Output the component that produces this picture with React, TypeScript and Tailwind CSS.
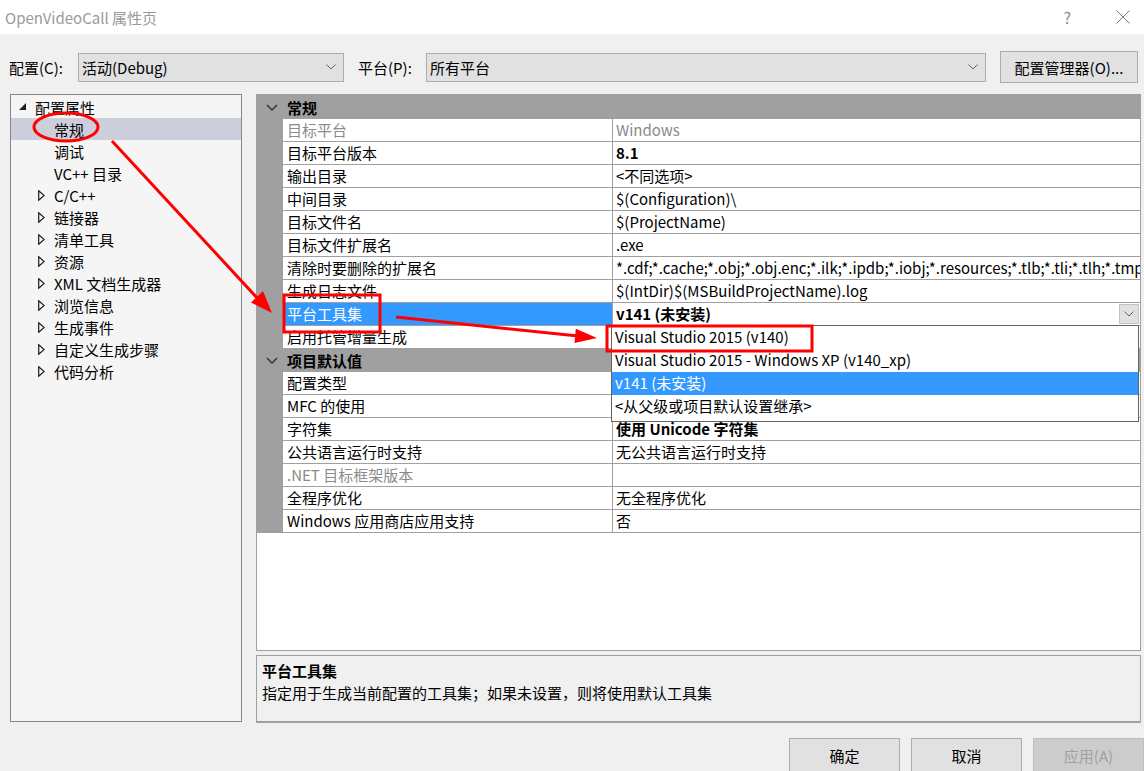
import type { ReactNode } from 'react'

type Prop = {
  name: string
  value?: string
  bold?: boolean
  dim?: boolean
  selected?: boolean
}

const GENERAL: Prop[] = [
  { name: '目标平台', value: 'Windows', dim: true },
  { name: '目标平台版本', value: '8.1', bold: true },
  { name: '输出目录', value: '<不同选项>' },
  { name: '中间目录', value: '$(Configuration)\\' },
  { name: '目标文件名', value: '$(ProjectName)' },
  { name: '目标文件扩展名', value: '.exe' },
  {
    name: '清除时要删除的扩展名',
    value: '*.cdf;*.cache;*.obj;*.obj.enc;*.ilk;*.ipdb;*.iobj;*.resources;*.tlb;*.tli;*.tlh;*.tmp;*.rsp;*.pgc;*.pgd;*.meta',
  },
  { name: '生成日志文件', value: '$(IntDir)$(MSBuildProjectName).log' },
  { name: '平台工具集', value: 'v141 (未安装)', bold: true, selected: true },
  { name: '启用托管增量生成', value: '否' },
]

const DEFAULTS: Prop[] = [
  { name: '配置类型', value: '应用程序(.exe)' },
  { name: 'MFC 的使用', value: '使用标准 Windows 库' },
  { name: '字符集', value: '使用 Unicode 字符集', bold: true },
  { name: '公共语言运行时支持', value: '无公共语言运行时支持' },
  { name: '.NET 目标框架版本', dim: true },
  { name: '全程序优化', value: '无全程序优化' },
  { name: 'Windows 应用商店应用支持', value: '否' },
]

const TREE: { label: string; level: 0 | 1; expander?: 'open' | 'closed'; active?: boolean }[] = [
  { label: '配置属性', level: 0, expander: 'open' },
  { label: '常规', level: 1, active: true },
  { label: '调试', level: 1 },
  { label: 'VC++ 目录', level: 1 },
  { label: 'C/C++', level: 1, expander: 'closed' },
  { label: '链接器', level: 1, expander: 'closed' },
  { label: '清单工具', level: 1, expander: 'closed' },
  { label: '资源', level: 1, expander: 'closed' },
  { label: 'XML 文档生成器', level: 1, expander: 'closed' },
  { label: '浏览信息', level: 1, expander: 'closed' },
  { label: '生成事件', level: 1, expander: 'closed' },
  { label: '自定义生成步骤', level: 1, expander: 'closed' },
  { label: '代码分析', level: 1, expander: 'closed' },
]

const TOOLSETS = [
  'Visual Studio 2015 (v140)',
  'Visual Studio 2015 - Windows XP (v140_xp)',
  'v141 (未安装)',
  '<从父级或项目默认设置继承>',
]

function Chevron({ className = '' }: { className?: string }) {
  return (
    <svg width="10" height="6" viewBox="0 0 10 6" className={className}>
      <path d="M0.5 0.5 L5 5 L9.5 0.5" fill="none" stroke="#606060" strokeWidth="1" />
    </svg>
  )
}

function Combo({ width, children }: { width: string; children: ReactNode }) {
  return (
    <div className={`${width} h-[29px] flex items-center justify-between bg-[#e1e1e1] border border-[#adadad] pl-[3px] pr-[7px]`}>
      <span className="leading-none">{children}</span>
      <Chevron />
    </div>
  )
}

function SectionHeader({ title, tall }: { title: string; tall?: boolean }) {
  return (
    <div className={`${tall ? 'h-[24px]' : 'h-[23px]'} flex items-center bg-[#a0a0a0]`}>
      <div className="w-[30px] flex justify-center">
        <svg width="12" height="7" viewBox="0 0 12 7">
          <path d="M1 1 L6 6 L11 1" fill="none" stroke="#3a3a3a" strokeWidth="1.6" />
        </svg>
      </div>
      <span className="font-bold leading-none">{title}</span>
    </div>
  )
}

function PropRow({ p }: { p: Prop }) {
  return (
    <div className="h-[23px] flex">
      <div className="w-[26px] shrink-0 bg-[#a0a0a0]" />
      <div
        className={`w-[330px] shrink-0 flex items-center pl-[4px] border-b border-r border-[#a0a0a0] whitespace-nowrap ${
          p.selected ? 'bg-[#3399ff] text-white' : p.dim ? 'text-[#8a8a8a]' : ''
        }`}
      >
        {p.name}
      </div>
      <div
        className={`relative flex-1 min-w-0 flex items-center pl-[3px] border-b border-[#a0a0a0] overflow-hidden whitespace-nowrap ${
          p.bold ? 'font-bold' : ''
        } ${p.dim ? 'text-[#8a8a8a]' : ''}`}
      >
        {p.value}
        {p.selected && (
          <div className="absolute right-[1px] top-[1px] w-[20px] h-[20px] flex items-center justify-center bg-[#e1e1e1] border border-[#c4c4c4]">
            <Chevron />
          </div>
        )}
      </div>
    </div>
  )
}

function TreeItem({ item }: { item: (typeof TREE)[number] }) {
  return (
    <div className={`h-[22px] flex items-center ${item.active ? 'bg-[#cccedb]' : ''}`}>
      <div className={`${item.level === 0 ? 'w-[24px] pl-[8px]' : 'w-[43px] pl-[27px]'} shrink-0 flex items-center`}>
        {item.expander === 'open' && (
          <svg width="8" height="8" viewBox="0 0 8 8">
            <polygon points="7,0 7,7 0,7" fill="#1e1e1e" />
          </svg>
        )}
        {item.expander === 'closed' && (
          <svg width="7" height="11" viewBox="0 0 7 11">
            <polygon points="0.7,0.7 6.2,5.5 0.7,10.3" fill="none" stroke="#1e1e1e" strokeWidth="1.2" />
          </svg>
        )}
      </div>
      <span className="leading-none whitespace-nowrap">{item.label}</span>
    </div>
  )
}

function Annotations() {
  return (
    <svg className="absolute inset-0 pointer-events-none" width="1144" height="771" viewBox="0 0 1144 771">
      <g stroke="#ff0000" strokeWidth="3" fill="none">
        <ellipse cx="66" cy="127" rx="32" ry="14" />
        <line x1="112" y1="141" x2="260" y2="301" />
        <rect x="284" y="295" width="96" height="37" />
        <line x1="396" y1="317" x2="578" y2="336" />
        <rect x="607" y="326" width="205" height="25" />
      </g>
      <g fill="#ff0000">
        <polygon points="272,313 251,302.5 263,291" />
        <polygon points="597,338 574.5,343 575.8,328.7" />
      </g>
    </svg>
  )
}

export default function App() {
  return (
    <div className="relative w-[1144px] h-[771px] overflow-hidden bg-[#f0f0f0] text-black text-[15px] font-['Noto_Sans_CJK_SC',sans-serif]">
      {/* Title bar */}
      <div className="h-[34px] bg-white flex items-center justify-between pl-[5px]">
        <span className="text-[#9a9a9a] leading-none">OpenVideoCall 属性页</span>
        <div className="flex items-center">
          <span className="text-[#8a8a8a] text-[16px] leading-none mr-[45px]">?</span>
          <svg width="14" height="14" viewBox="0 0 14 14" className="mr-[14px]">
            <path d="M0.5 0.5 L13.5 13.5 M13.5 0.5 L0.5 13.5" stroke="#777" strokeWidth="1" />
          </svg>
        </div>
      </div>

      {/* Configuration / platform bar */}
      <div className="mt-[17px] h-[32px] flex items-center">
        <span className="ml-[9px] w-[69px] leading-none">配置(C):</span>
        <Combo width="w-[266px]">活动(Debug)</Combo>
        <span className="ml-[14px] w-[68px] leading-none">平台(P):</span>
        <Combo width="w-[560px]">所有平台</Combo>
        <button className="ml-[14px] w-[138px] h-[32px] bg-[#e1e1e1] border border-[#adadad] leading-none">
          配置管理器(O)...
        </button>
      </div>

      {/* Main area */}
      <div className="mt-[11px] flex">
        <div className="ml-[10px] w-[232px] h-[628px] bg-[#f5f5f5] border border-[#828790] pt-[1px]">
          {TREE.map((item) => (
            <TreeItem key={item.label} item={item} />
          ))}
        </div>

        <div className="ml-[14px] w-[885px] flex flex-col">
          <div className="h-[557px] bg-white border border-[#a0a0a0]">
            <SectionHeader title="常规" tall />
            {GENERAL.map((p) => (
              <PropRow key={p.name} p={p} />
            ))}
            <SectionHeader title="项目默认值" />
            {DEFAULTS.map((p) => (
              <PropRow key={p.name} p={p} />
            ))}
          </div>

          <div className="mt-[4px] h-[68px] border border-[#a0a0a0] border-b-2 pl-[5px] pt-[4px]">
            <div className="font-bold leading-[22px]">平台工具集</div>
            <div className="leading-[22px]">指定用于生成当前配置的工具集；如果未设置，则将使用默认工具集</div>
          </div>
        </div>
      </div>

      {/* Dialog buttons */}
      <div className="mt-[15px] flex justify-end gap-[11px]">
        <button className="w-[111px] h-[35px] bg-[#e1e1e1] border border-[#adadad] leading-none">确定</button>
        <button className="w-[111px] h-[35px] bg-[#e1e1e1] border border-[#adadad] leading-none">取消</button>
        <button className="w-[111px] h-[35px] bg-[#cccccc] border border-[#bfbfbf] text-[#a0a0a0] leading-none">
          应用(A)
        </button>
      </div>

      {/* Open toolset dropdown */}
      <div className="absolute left-[611px] top-[325px] w-[528px] h-[97px] bg-white border border-[#646464]">
        {TOOLSETS.map((t, i) => (
          <div
            key={t}
            className={`h-[23px] flex items-center pl-[3px] whitespace-nowrap ${i === 2 ? 'bg-[#3399ff] text-white' : ''}`}
          >
            {t}
          </div>
        ))}
      </div>

      <Annotations />
    </div>
  )
}
